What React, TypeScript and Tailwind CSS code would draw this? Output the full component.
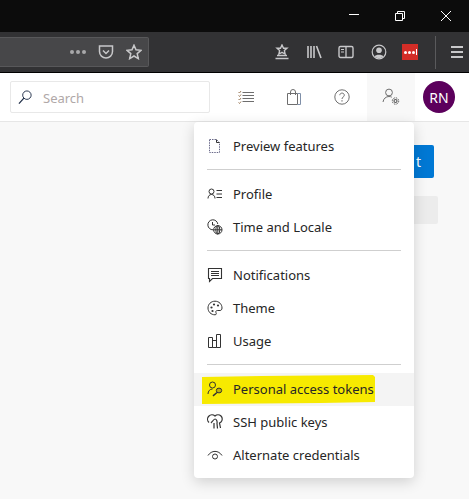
import React from "react";

const Icon: React.FC<{ size?: number; width?: number; className?: string; children: React.ReactNode; vb?: string }> = ({
  size = 16,
  width,
  className = "",
  children,
  vb = "0 0 16 16",
}) => (
  <svg width={width ?? size} height={size} viewBox={vb} fill="none" stroke="currentColor" strokeWidth="1" className={className}>
    {children}
  </svg>
);

const MenuSeparator = () => <div className="mx-[13px] mt-[6px] mb-[8px] h-px bg-[#cfcfcf]" />;

const MenuItem: React.FC<{ icon: React.ReactNode; label: string; active?: boolean }> = ({ icon, label, active }) => (
  <div className={`relative flex h-[33px] items-center pl-[13px] ${active ? "bg-[#f4f4f4]" : ""}`}>
    {active && (
      <svg width="175" height="30" viewBox="0 0 175 30" className="absolute left-[7px] top-[2px]">
        <path d="M1 2 L60 1 L172 0 L174 2 L174 27 L120 28 L1 29 Z" fill="#f7ea00" />
      </svg>
    )}
    <span className="relative flex w-[26px] shrink-0 -translate-y-px text-[#333333]">{icon}</span>
    <span className="relative text-[13px] text-[#262626]">{label}</span>
  </div>
);

export default function App() {
  return (
    <div className="relative flex h-[499px] w-[469px] flex-col overflow-hidden bg-[#f8f8f8] font-['Noto_Sans',sans-serif]">
      {/* window title bar */}
      <div className="flex h-[32px] shrink-0 items-center justify-end bg-[#0c0c0c] pr-[17px] text-white">
        <Icon size={12} vb="0 0 12 12" className="mr-[34px]">
          <path d="M1 4.5H11" />
        </Icon>
        <Icon size={12} vb="0 0 12 12" className="mr-[34px]">
          <path d="M1.5 3.5H8.5V10.5H1.5Z M3.5 3.5V1.5H10.5V8.5H8.5" />
        </Icon>
        <Icon size={12} vb="0 0 12 12">
          <path d="M1 1L11 11M11 1L1 11" />
        </Icon>
      </div>

      {/* firefox toolbar */}
      <div className="flex h-[41px] shrink-0 items-center border-b border-black bg-[#323234] text-[#c8c8ca]">
        <div className="flex h-[30px] w-[149px] items-center justify-end rounded-r-[2px] border border-l-0 border-[#58585a] bg-[#474749] pr-[6px]">
          <div className="mr-[12px] flex gap-[2px]">
            <span className="h-[4px] w-[4px] rounded-full bg-[#a8a8aa]" />
            <span className="h-[4px] w-[4px] rounded-full bg-[#a8a8aa]" />
            <span className="h-[4px] w-[4px] rounded-full bg-[#a8a8aa]" />
          </div>
          <Icon size={16} className="mr-[12px]">
            <path d="M1.5 2H14.5V7.5A6.5 6.5 0 0 1 1.5 7.5Z" strokeWidth="1.5" />
            <path d="M5 6.5L8 9.5L11 6.5" strokeWidth="1.5" />
          </Icon>
          <Icon size={16}>
            <path d="M8 1.2L10 5.8L15 6.3L11.2 9.6L12.3 14.6L8 12L3.7 14.6L4.8 9.6L1 6.3L6 5.8Z" strokeWidth="1.5" />
          </Icon>
        </div>
        <div className="ml-[125px] flex items-center">
          <Icon size={16} className="mr-[16px]">
            <path d="M8 1L9.5 4.2H13L10.4 6.6L11.1 10L8 8.3L4.9 10L5.6 6.6L3 4.2H6.5Z" strokeWidth="1.4" />
            <path d="M3 11.5H13M1.5 14.5H14.5" strokeWidth="1.6" />
          </Icon>
          <Icon size={16} className="mr-[16px]">
            <path d="M2 2V14M5 2V14M8 2V14M10.5 2L15 14" strokeWidth="1.6" />
          </Icon>
          <Icon size={16} className="mr-[17px]">
            <rect x="1" y="2.5" width="14" height="11" rx="1.5" strokeWidth="1.4" />
            <path d="M8 3V13" strokeWidth="1.3" />
            <path d="M3 5.5H6M3 8H6" strokeWidth="1.2" />
          </Icon>
          <Icon size={16} className="mr-[15px]">
            <circle cx="8" cy="8" r="6.8" strokeWidth="1.2" />
            <circle cx="8" cy="6.2" r="2.8" fill="currentColor" stroke="none" />
            <path d="M3.5 12.5C4.5 10 11.5 10 12.5 12.5C10 14.5 6 14.5 3.5 12.5Z" fill="currentColor" stroke="none" />
          </Icon>
          <div className="mr-[17px] flex h-[16px] w-[16px] items-center justify-center gap-[1px] bg-[#d32d27]">
            <span className="h-[3px] w-[3px] rounded-full bg-white" />
            <span className="h-[3px] w-[3px] rounded-full bg-white" />
            <span className="h-[3px] w-[3px] rounded-full bg-white" />
            <span className="h-[6px] w-px bg-white" />
          </div>
          <div className="mr-[15px] h-[33px] w-px bg-[#5a5a5c]" />
          <div className="flex w-[12px] flex-col gap-[3px]">
            <span className="h-[2px] bg-[#c8c8ca]" />
            <span className="h-[2px] bg-[#c8c8ca]" />
            <span className="h-[2px] bg-[#c8c8ca]" />
          </div>
        </div>
      </div>

      {/* devops header */}
      <div className="flex h-[49px] shrink-0 items-center border-b border-[#e6e6e6] bg-white text-[#6e6e6e]">
        <div className="ml-[10px] flex h-[32px] w-[200px] items-center rounded-[2px] border border-[#e8e8e8] pl-[7px]">
          <Icon size={15} className="text-[#1c2b45]">
            <circle cx="9.5" cy="5.5" r="4.5" />
            <path d="M6.3 8.7L1 14.5" strokeWidth="1.3" />
          </Icon>
          <span className="ml-[10px] pt-[3px] text-[13px] text-[#b0a8a8]">Search</span>
        </div>
        <Icon size={16} className="ml-[28px]">
          <path d="M4.5 3.5H16M4.5 6.5H16M4.5 9.5H16M4.5 12.5H16" />
          <path d="M0.5 3L1.5 4L3 2M0.5 6.5L1.5 7.5L3 5.5M0.5 10L1.5 11L3 9M0.5 13.5L1.5 14.5L3 12.5" stroke="#a08060" />
        </Icon>
        <Icon size={16} width={14} vb="0 0 14 16" className="ml-[33px]">
          <path d="M0.5 4.5H10.5V15.5H0.5Z" />
          <path d="M10.5 4.5H13.5V15.5H10.5" stroke="#7f8fa8" />
          <path d="M3.5 6V3A2.5 2.5 0 0 1 8.5 3V6" />
        </Icon>
        <Icon size={16} className="ml-[33px]">
          <circle cx="8" cy="8" r="7.2" />
          <path d="M5.8 6.2C5.8 3.4 10.3 3.4 10.3 6.2C10.3 8 8 8 8 10" />
          <path d="M8 11.3V12.5" strokeWidth="1.2" />
        </Icon>
        <div className="ml-[17px] flex h-[48px] w-[48px] items-center justify-center bg-[#f8f8f8]">
          <Icon size={18} vb="0 0 18 18">
            <circle cx="7" cy="4.5" r="3.4" />
            <path d="M1 14C1.5 10.5 4 8.5 7 8.5C8 8.5 9 8.7 9.8 9.2" />
            <circle cx="13.5" cy="13" r="1.5" strokeWidth="1.2" stroke="#5a5a5a" />
            <circle cx="13.5" cy="13" r="3.2" strokeDasharray="1.5 1" stroke="#5a5a5a" />
          </Icon>
        </div>
        <div className="ml-[8px] flex h-[32px] w-[32px] items-center justify-center rounded-full bg-[#5c005c] text-[14px] text-white">
          RN
        </div>
      </div>

      {/* page behind the menu */}
      <div className="relative flex-1">
        <div className="absolute left-[360px] top-[23px] flex h-[33px] w-[74px] items-center justify-end rounded-[2px] bg-[#0078d4] pr-[13px] text-[14px] text-white">
          t
        </div>
        <div className="absolute left-[360px] top-[74px] h-[28px] w-[78px] rounded-[2px] bg-[#ececec]" />
      </div>

      {/* user settings dropdown */}
      <div className="absolute left-[194px] top-[122px] w-[220px] rounded-[4px] bg-white pt-[8px] pb-[6px] shadow-[0_4px_14px_rgba(0,0,0,0.16)]">
        <MenuItem
          label="Preview features"
          icon={
            <Icon size={16}>
              <path d="M2.5 1.5H9.5L12.5 4.5V14.5H2.5Z" strokeDasharray="1.5 1" stroke="#6a6a8a" />
              <path d="M9.5 1.5V4.5H12.5" />
            </Icon>
          }
        />
        <MenuSeparator />
        <MenuItem
          label="Profile"
          icon={
            <Icon size={16}>
              <circle cx="4.5" cy="5.5" r="2.5" />
              <path d="M1 12.5C1 10 2.5 8.5 4.5 8.5S8 10 8 12.5" />
              <path d="M9.5 4.5H15M9.5 8H15M9.5 11.5H15" />
            </Icon>
          }
        />
        <MenuItem
          label="Time and Locale"
          icon={
            <Icon size={16}>
              <path d="M6 10.8A5 5 0 1 1 10.8 5" />
              <path d="M5.5 3V6H8" />
              <circle cx="10.8" cy="10.8" r="4.2" />
              <path d="M6.6 10.8H15M10.8 6.6V15" />
              <ellipse cx="10.8" cy="10.8" rx="2" ry="4.2" />
            </Icon>
          }
        />
        <MenuSeparator />
        <MenuItem
          label="Notifications"
          icon={
            <Icon size={16}>
              <path d="M1.5 1.5H14.5V11.5H5.5L2.5 14.5V11.5H1.5Z" strokeWidth="1.1" />
              <path d="M4 4.5H12M4 6.5H12M4 8.5H12" />
            </Icon>
          }
        />
        <MenuItem
          label="Theme"
          icon={
            <Icon size={16}>
              <path d="M8 1.2C4 1.2 1 4.2 1 8C1 11.8 4 14.8 8 14.8C9.5 14.8 9.5 13.5 9 12.7C8.4 11.7 9 10.5 10.3 10.5H13C14.2 10.5 15 9.5 15 8C15 4.2 12 1.2 8 1.2Z" />
              <circle cx="4.5" cy="7.5" r="1.1" fill="currentColor" stroke="none" />
              <circle cx="7" cy="4.5" r="1.1" fill="currentColor" stroke="none" />
              <circle cx="11" cy="5.5" r="1.1" fill="currentColor" stroke="none" />
              <circle cx="5.5" cy="11" r="1.1" fill="currentColor" stroke="none" />
            </Icon>
          }
        />
        <MenuItem
          label="Usage"
          icon={
            <Icon size={16}>
              <path d="M1.5 4.5H5.5V14.5H1.5Z M5.5 7.5H9.5V14.5H5.5Z M9.5 1.5H13.5V14.5H9.5Z" />
            </Icon>
          }
        />
        <MenuSeparator />
        <MenuItem
          active
          label="Personal access tokens"
          icon={
            <Icon size={16}>
              <circle cx="5.5" cy="4" r="3" />
              <path d="M1 13C1 10 3 8 5.5 8" />
              <ellipse cx="12" cy="9.5" rx="2.7" ry="2.4" fill="currentColor" fillOpacity="0.3" />
              <path d="M10 11.5L6 14.8" strokeWidth="1.5" />
            </Icon>
          }
        />
        <MenuItem
          label="SSH public keys"
          icon={
            <Icon size={16}>
              <path d="M2 8.5A4 4 0 0 1 8 2A4 4 0 0 1 14 8L12.5 9L13.5 14" strokeWidth="1.2" />
              <path d="M4 9C5 8 7 5 8 5C9.5 5 10.5 7.5 10 9.5L10.5 14.5M7 9L7 14.5" strokeWidth="1.2" />
            </Icon>
          }
        />
        <MenuItem
          label="Alternate credentials"
          icon={
            <Icon size={16}>
              <path d="M1 8.5C4.5 3 11.5 3 15 8.5" />
              <circle cx="8" cy="9.5" r="2.5" />
            </Icon>
          }
        />
      </div>
    </div>
  );
}
